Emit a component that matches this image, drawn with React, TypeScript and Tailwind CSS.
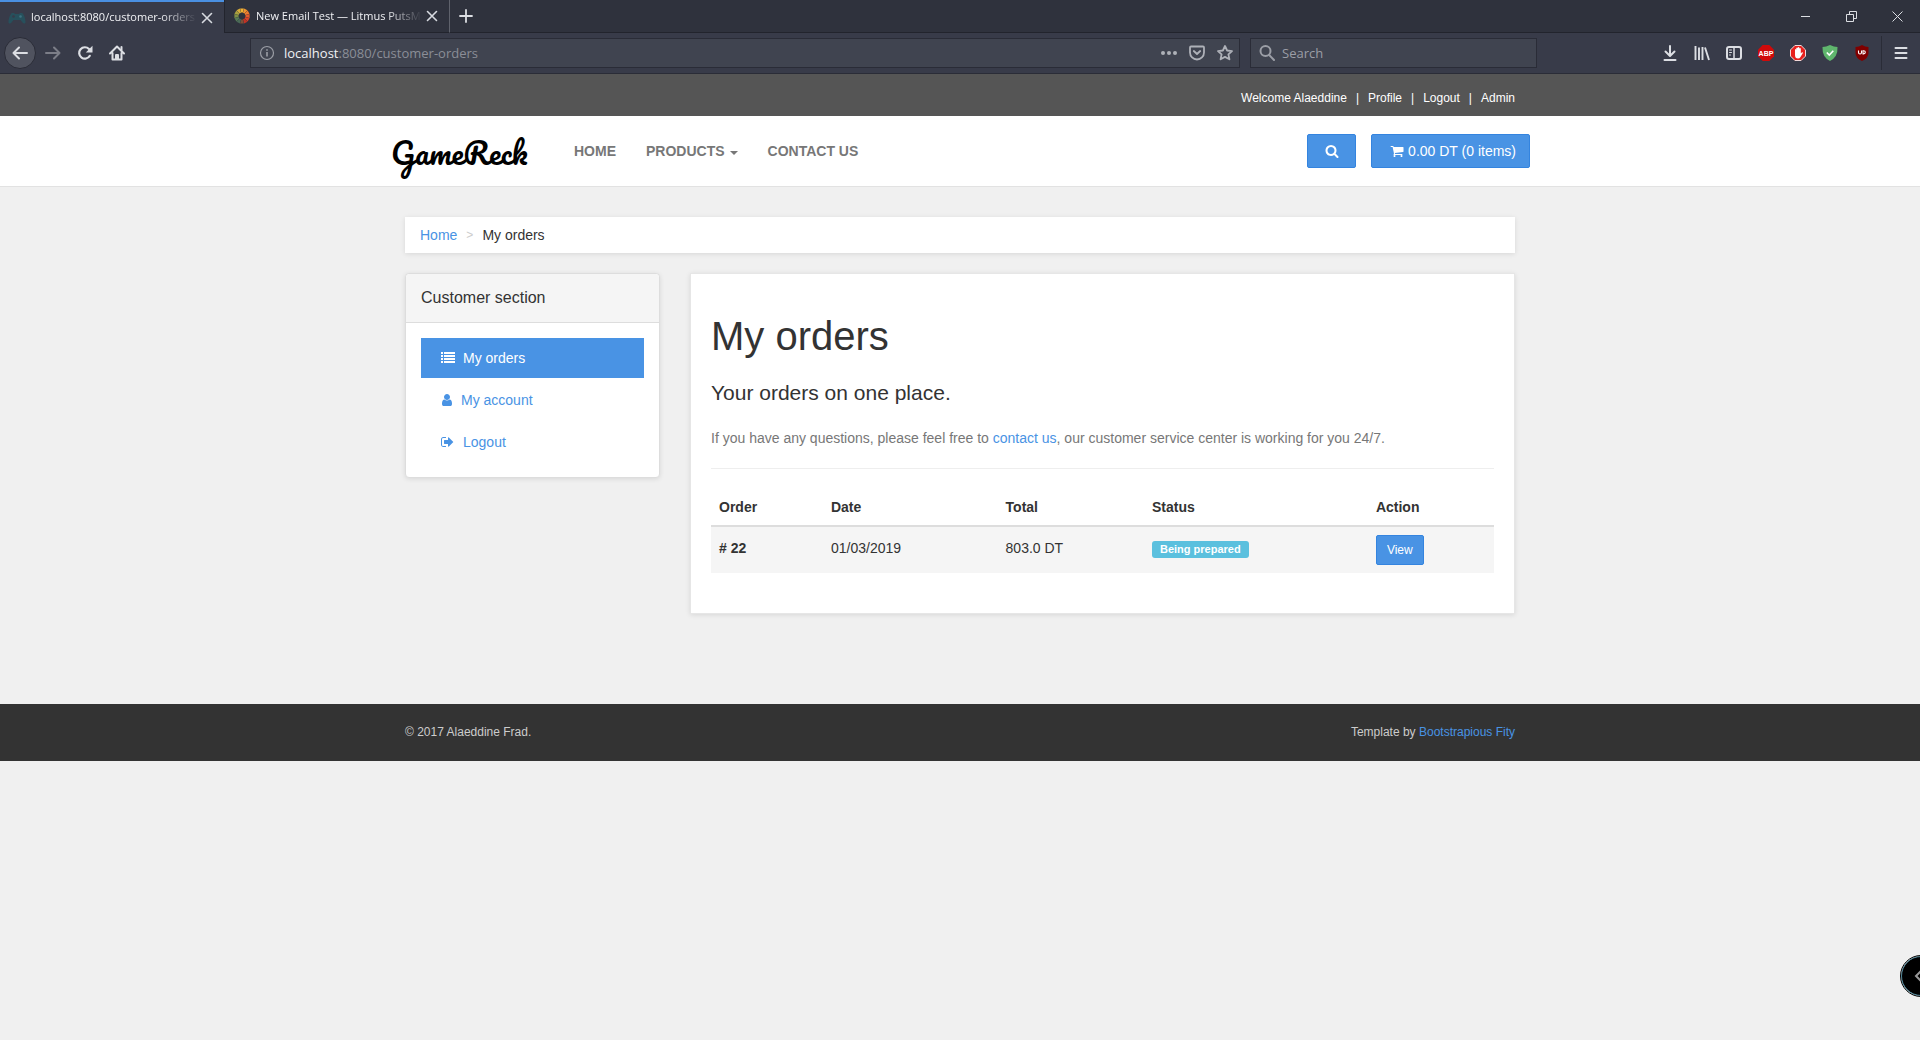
import React from "react";

const FA = {
  search:
    "M1216 832q0-185-131.5-316.5t-316.5-131.5-316.5 131.5-131.5 316.5 131.5 316.5 316.5 131.5 316.5-131.5 131.5-316.5zm512 832q0 52-38 90t-90 38q-54 0-90-38l-343-342q-179 124-399 124-143 0-273.5-55.5t-225-150-150-225-55.5-273.5 55.5-273.5 150-225 225-150 273.5-55.5 273.5 55.5 225 150 150 225 55.5 273.5q0 220-124 399l343 343q37 37 37 90z",
  cart:
    "M704 1536q0 52-38 90t-90 38-90-38-38-90 38-90 90-38 90 38 38 90zm896 0q0 52-38 90t-90 38-90-38-38-90 38-90 90-38 90 38 38 90zm128-1088v512q0 24-16.5 42.5t-40.5 21.5l-1044 122q13 60 13 70 0 16-24 64h920q26 0 45 19t19 45-19 45-45 19h-1024q-26 0-45-19t-19-45q0-11 8-31.5t16-36 21.5-40 15.5-29.5l-177-823h-204q-26 0-45-19t-19-45 19-45 45-19h256q16 0 28.5 6.5t19.5 15.5 13 24.5 8 26 5.5 29.5 4.5 26h1201q26 0 45 19t19 45z",
  list:
    "M0 1280h256v256h-256zM0 896h256v256h-256zM0 512h256v256h-256zM0 128h256v256h-256zM384 1280h1408v256h-1408zM384 896h1408v256h-1408zM384 512h1408v256h-1408zM384 128h1408v256h-1408z",
  user:
    "M1408 1399q0 109-62.5 187t-150.5 78h-854q-88 0-150.5-78t-62.5-187q0-85 8.5-160.5t31.5-152 58.5-131 94-89 134.5-34.5q131 128 313 128t313-128q76 0 134.5 34.5t94 89 58.5 131 31.5 152 8.5 160.5zm-256-887q0 159-112.5 271.5t-271.5 112.5-271.5-112.5-112.5-271.5 112.5-271.5 271.5-112.5 271.5 112.5 112.5 271.5z",
  signOut:
    "M640 1440q0 4 1 20t.5 26.5-3 23.5-10 19.5-20.5 6.5h-320q-119 0-203.5-84.5t-84.5-203.5v-704q0-119 84.5-203.5t203.5-84.5h320q13 0 22.5 9.5t9.5 22.5q0 4 1 20t.5 26.5-3 23.5-10 19.5-20.5 6.5h-320q-66 0-113 47t-47 113v704q0 66 47 113t113 47h312l11.5 1 11.5 3 8 5.5 7 9 2 13.5zm928-544q0 26-19 45l-544 544q-19 19-45 19t-45-19-19-45v-288h-448q-26 0-45-19t-19-45v-384q0-26 19-45t45-19h448v-288q0-26 19-45t45-19 45 19l544 544q19 19 19 45z",
};

function Glyph({ d }: { d: string }) {
  return (
    <svg viewBox="0 0 1792 1792" className="size-3.5 shrink-0" fill="currentColor" aria-hidden="true">
      <path d={d} />
    </svg>
  );
}

function Line({ children, className = "size-4", w = 2 }: { children: React.ReactNode; className?: string; w?: number }) {
  return (
    <svg
      viewBox="0 0 16 16"
      className={className}
      fill="none"
      stroke="currentColor"
      strokeWidth={w}
      strokeLinecap="round"
      strokeLinejoin="round"
      aria-hidden="true"
    >
      {children}
    </svg>
  );
}

function CloseTab({ label }: { label: string }) {
  return (
    <button aria-label={label} className="flex size-5 shrink-0 items-center justify-center text-[#d7dae0]">
      <Line className="size-4" w={1.6}>
        <path d="M3.5 3.5l9 9M12.5 3.5l-9 9" />
      </Line>
    </button>
  );
}

const wheel = ["#f2b233", "#f0952f", "#ee7a2e", "#e55a2c", "#d8412a", "#c23325", "#7c5138", "#4b6a58", "#567a56", "#7e8f45", "#a9a040", "#d7ad3a"];

function TabStrip() {
  return (
    <div className="flex h-[33px] bg-[#2f323d] text-[11px] text-[#f0f1f4]">
      <div className="flex w-56 items-center border-t-2 border-[#4a90e2] bg-[#383b49] pr-[7px] pl-2">
        <svg viewBox="0 0 18 14" className="h-3.5 w-[18px] shrink-0" aria-hidden="true">
          <path d="M4 2h2l1 1h4l1-1h2c2 1 3.500 6 3.500 9 0 2-2 2-3 .5L12.500 9h-7l-2 2.500c-1 1.500-3 1.500-3-.5C.5 8 2 3 4 2z" fill="#27505c" />
          <circle cx="5.500" cy="5.500" r="1.300" fill="#383b49" />
          <circle cx="12.500" cy="5.500" r="1.300" fill="#3c7280" />
        </svg>
        <span className="ml-[5px] min-w-0 flex-1 overflow-hidden whitespace-nowrap [mask-image:linear-gradient(to_left,transparent,black_36px)]">
          localhost:8080/customer-orders
        </span>
        <CloseTab label="Close customer orders tab" />
      </div>
      <div className="flex w-[226px] items-center border-r border-b border-l border-r-[#5f626c] border-b-[#22242d] border-l-[#22242d] pr-[7px] pl-[9px]">
        <svg viewBox="-8 -8 16 16" className="size-4 shrink-0" aria-hidden="true">
          {wheel.map((color, i) => (
            <path key={color} d="M-1.900 -7.600L1.900 -7.600L.8 -3.400L-.8 -3.400Z" fill={color} transform={`rotate(${i * 30})`} />
          ))}
        </svg>
        <span className="ml-[6px] min-w-0 flex-1 overflow-hidden pt-px whitespace-nowrap [mask-image:linear-gradient(to_left,transparent,black_36px)]">
          New Email Test — Litmus PutsMail
        </span>
        <CloseTab label="Close Litmus tab" />
      </div>
      <div className="flex flex-1 items-center justify-between border-b border-[#22242d] pl-2 text-[#dcdee3]">
        <button aria-label="New tab">
          <Line w={1.8}>
            <path d="M8 2v12M2 8h12" />
          </Line>
        </button>
        <div className="flex">
          <button aria-label="Minimize" className="flex w-[46px] justify-center">
            <svg viewBox="0 0 11 11" className="size-[11px]" stroke="currentColor" aria-hidden="true">
              <path d="M1 5.500h9" />
            </svg>
          </button>
          <button aria-label="Restore" className="flex w-[46px] justify-center">
            <svg viewBox="0 0 11 11" className="size-[11px]" fill="none" stroke="currentColor" aria-hidden="true">
              <path d="M.5 3.500h7v7h-7zM3.500 3.500v-3h7v7h-3" />
            </svg>
          </button>
          <button aria-label="Close window" className="flex w-[46px] justify-center">
            <svg viewBox="0 0 11 11" className="size-[11px]" stroke="currentColor" aria-hidden="true">
              <path d="M.5 .5l10 10M10.500 .5l-10 10" />
            </svg>
          </button>
        </div>
      </div>
    </div>
  );
}

function BrowserBar() {
  return (
    <div className="flex h-[41px] items-center border-b border-[#2a2c37] bg-[#383b49] text-[#dcdee3]">
      <button aria-label="Back" className="ml-1 flex size-8 items-center justify-center rounded-full border border-[#2a2c37] bg-[#50535f]">
        <Line w={2}>
          <path d="M15 8H1.500M7 2.500L1.500 8L7 13.500" />
        </Line>
      </button>
      <button aria-label="Forward" className="ml-[9px] text-[#7c7e88]">
        <Line w={2}>
          <path d="M1 8h13.500M9 2.500L14.500 8L9 13.500" />
        </Line>
      </button>
      <button aria-label="Reload" className="ml-4">
        <Line w={2.2}>
          <path d="M12.800 10.800A5.700 5.700 0 1 1 12 4" />
          <path d="M15.500 .8v6.700h-6.700z" fill="currentColor" stroke="none" />
        </Line>
      </button>
      <button aria-label="Home" className="ml-4">
        <Line w={2}>
          <path d="M1 8.500L8 1.500l7 7M3.500 8v6.500h9V8" />
          <path d="M7 14v-4h2v4" />
          <path d="M12.500 2v3" />
        </Line>
      </button>
      <div className="ml-[125px] flex h-[30px] min-w-0 flex-1 items-center border border-[#2a2c37] bg-[#404450] pr-[6px] pl-2">
        <svg viewBox="0 0 16 16" className="size-4 text-[#9b9ea6]" fill="none" stroke="currentColor" aria-hidden="true">
          <circle cx="8" cy="8" r="6.500" strokeWidth="1.200" />
          <path d="M8 7v4.500M8 4.200v1.600" strokeWidth="1.600" />
        </svg>
        <span className="ml-[9px] min-w-0 flex-1 truncate pt-px text-[13px] text-[#8b8e97]">
          <span className="text-[#f0f1f4]">localhost</span>:8080/customer-orders
        </span>
        <div className="flex items-center gap-3 text-[#aeb1b8]">
          <button aria-label="Page actions">
            <svg viewBox="0 0 16 16" className="size-4" fill="currentColor" aria-hidden="true">
              <circle cx="2" cy="8" r="2" />
              <circle cx="8" cy="8" r="2" />
              <circle cx="14" cy="8" r="2" />
            </svg>
          </button>
          <button aria-label="Save to Pocket">
            <Line w={1.800}>
              <path d="M2 1.500h12q1 0 1 1v5a7 7 0 0 1-14 0v-5q0-1 1-1z" />
              <path d="M4.800 6L8 9l3.200-3" />
            </Line>
          </button>
          <button aria-label="Bookmark this page">
            <Line w={1.800}>
              <path d="M8 1l2.100 4.500 4.900.6-3.600 3.300 1 4.900L8 11.900l-4.400 2.400 1-4.900L1 6.100l4.900-.6z" />
            </Line>
          </button>
        </div>
      </div>
      <label className="ml-[10px] flex h-[30px] w-[287px] items-center border border-[#2a2c37] bg-[#404450] pl-2 text-[#9b9ea6]">
        <Line w={2} className="size-4">
          <circle cx="6.500" cy="6" r="5" />
          <path d="M10.200 10L15 15" />
        </Line>
        <input aria-label="Search the web" placeholder="Search" className="ml-[7px] min-w-0 flex-1 bg-transparent pt-px text-[13px] outline-none placeholder:text-[#9b9ea6]" />
      </label>
      <div className="ml-[125px] flex items-center gap-4">
        <button aria-label="Downloads">
          <Line w={2}>
            <path d="M8 1v9.500M3.500 6.500L8 11l4.500-4.500M2.500 15h11" />
          </Line>
        </button>
        <button aria-label="Library">
          <svg viewBox="0 0 16 16" className="size-4" stroke="currentColor" strokeWidth="1.900" aria-hidden="true">
            <path d="M1.500 1v14M5 2.500v12.500M8.500 2v13M11 2.500l4 12.500" />
          </svg>
        </button>
        <button aria-label="Sidebars">
          <Line w={2}>
            <rect x="1" y="2" width="14" height="12" rx="2" />
            <path d="M8 2v12" strokeWidth="1.500" />
            <path d="M3.500 5h2M3.500 7.500h2M3.500 10h1" strokeWidth="1" />
          </Line>
        </button>
        <button aria-label="Adblock Plus">
          <svg viewBox="0 0 16 16" className="size-4" aria-hidden="true">
            <path d="M4.700 0h6.600L16 4.700v6.600L11.300 16H4.700L0 11.300V4.700z" fill="#d00a0a" />
            <text x="8" y="10.500" fontSize="7" fontWeight="700" textAnchor="middle" fill="#fff" className="font-['Liberation_Sans',sans-serif]">
              ABP
            </text>
          </svg>
        </button>
        <button aria-label="Content blocker">
          <svg viewBox="0 0 16 16" className="size-4" aria-hidden="true">
            <path d="M4.900.5h6.200l4.400 4.400v6.200l-4.400 4.400H4.900L.5 11.100V4.900z" fill="#e8201c" stroke="#f2d8d8" />
            <path d="M5 8V4.500q.7-.8 1.300 0V3q.8-.9 1.500 0v-.5q.8-.8 1.500 0V3.500q.8-.8 1.500 0v5l1.200-1.200q1-.3.900.6L10.500 12q-.8 1.500-2.500 1.500Q5 13.500 5 10z" fill="#fff" />
          </svg>
        </button>
        <button aria-label="Web protection">
          <svg viewBox="0 0 16 16" className="size-4" aria-hidden="true">
            <path d="M8 0q4 2 7.500 2 .5 10-7.500 14Q0 12 .5 2 4 2 8 0z" fill="#5fb56d" />
            <path d="M4.800 7.500L7.300 10l4-4.200" fill="none" stroke="#fff" strokeWidth="1.600" />
          </svg>
        </button>
        <button aria-label="Tracker shield">
          <svg viewBox="0 0 16 16" className="size-4" aria-hidden="true">
            <path d="M8 0q3 2 6.500 2v6q0 5-6.500 8-6.500-3-6.500-8V2Q5 2 8 0z" fill="#800000" />
            <path d="M4.500 5.500v2q0 1.500 1.500 1.500t1.500-1.500v-2M9 5.700v3.200h.6q1.700-.1 1.700-1.600T9.600 5.700z" fill="none" stroke="#fff" strokeWidth="1.100" />
          </svg>
        </button>
      </div>
      <div className="ml-[11px] h-[34px] border-l border-[#2a2c37]" />
      <button aria-label="Open menu" className="mr-[11px] ml-[11px]">
        <Line w={2}>
          <path d="M2.500 3h11M2.500 8h11M2.500 13h11" />
        </Line>
      </button>
    </div>
  );
}

function TopBar() {
  return (
    <div className="bg-[#555] text-xs text-white">
      <div className="mx-auto flex h-[42px] max-w-[1140px] items-center justify-end gap-[9px] px-[15px] pt-1.5">
        <span className="font-medium">Welcome Alaeddine</span>
        <span>|</span>
        <a href="#profile">Profile</a>
        <span>|</span>
        <a href="#logout">Logout</a>
        <span>|</span>
        <a href="#admin">Admin</a>
      </div>
    </div>
  );
}

function SiteNav() {
  return (
    <header className="border-b border-[#e2e2e2] bg-white">
      <div className="mx-auto flex h-[70px] max-w-[1140px] items-center">
        <a href="#home" className="w-[154px] pt-1 pl-px font-[Pacifico,Lato,cursive] text-[30px] leading-9 font-normal whitespace-nowrap text-black">
          GameReck
        </a>
        <nav className="flex flex-1 gap-[30px] pl-[30px] text-sm font-bold text-[#777]">
          <a href="#home">HOME</a>
          <a href="#products" className="flex items-center">
            PRODUCTS
            <svg viewBox="0 0 8 4" className="mt-1 ml-[5px] h-1 w-2" fill="currentColor" aria-hidden="true">
              <path d="M0 0h8L4 4z" />
            </svg>
          </a>
          <a href="#contact">CONTACT US</a>
        </nav>
        <button aria-label="Search" className="flex h-[34px] w-[49px] items-center justify-center rounded-xs border border-[#3484df] bg-[#4993e4] text-white">
          <Glyph d={FA.search} />
        </button>
        <a href="#cart" className="ml-[15px] flex h-[34px] items-center gap-1 rounded-xs border border-[#3484df] bg-[#4993e4] pr-[13px] pl-[18px] text-sm text-white">
          <Glyph d={FA.cart} />
          0.00 DT (0 items)
        </a>
      </div>
    </header>
  );
}

const menu = [
  { label: "My orders", icon: FA.list, gap: "gap-2", active: true },
  { label: "My account", icon: FA.user, gap: "gap-[6px]", active: false },
  { label: "Logout", icon: FA.signOut, gap: "gap-2", active: false },
];

function Sidebar() {
  return (
    <aside className="w-[255px] shrink-0 rounded-sm border border-[#ddd] bg-white shadow-[0_1px_5px_rgba(0,0,0,0.1)]">
      <h3 className="h-[49px] rounded-t-sm border-b border-[#ddd] bg-[#f5f5f5] px-[15px] pt-[14px] text-base leading-5 text-[#333]">Customer section</h3>
      <nav className="flex flex-col gap-[2px] p-[15px]">
        {menu.map((m) => (
          <a
            key={m.label}
            href={"#" + m.label.toLowerCase().replace(" ", "-")}
            className={"flex h-10 items-center px-5 text-sm " + m.gap + (m.active ? " bg-[#4993e4] text-white" : " text-[#4993e4]")}
          >
            <Glyph d={m.icon} />
            {m.label}
          </a>
        ))}
      </nav>
    </aside>
  );
}

function Orders() {
  return (
    <main className="min-w-0 flex-1 border border-[#e6e6e6] bg-white px-5 pb-10 shadow-[0_1px_5px_rgba(0,0,0,0.1)]">
      <h1 className="pt-10 text-[40px] leading-11 text-[#333]">My orders</h1>
      <p className="mt-5 text-[21px] leading-[30px] text-[#333]">Your orders on one place.</p>
      <p className="mt-5 text-sm leading-5 text-[#777]">
        If you have any questions, please feel free to{" "}
        <a href="#contact" className="text-[#4993e4]">
          contact us
        </a>
        , our customer service center is working for you 24/7.
      </p>
      <hr className="mt-5 border-[#eee]" />
      <table className="mt-5 w-full table-fixed text-left text-sm leading-5 text-[#333]">
        <colgroup>
          <col className="w-[14.3%]" />
          <col className="w-[22.3%]" />
          <col className="w-[18.7%]" />
          <col className="w-[28.6%]" />
          <col />
        </colgroup>
        <thead>
          <tr className="border-b-2 border-[#ddd]">
            <th className="p-2">Order</th>
            <th className="p-2">Date</th>
            <th className="p-2">Total</th>
            <th className="p-2">Status</th>
            <th className="p-2">Action</th>
          </tr>
        </thead>
        <tbody>
          <tr className="bg-[#f5f5f5] align-top">
            <th className="p-2 pt-[11px]"># 22</th>
            <td className="p-2 pt-[11px]">01/03/2019</td>
            <td className="p-2 pt-[11px]">803.0 DT</td>
            <td className="p-2 pt-[14px]">
              <span className="block h-[17px] w-fit rounded-[3px] bg-[#5bc0de] px-2 text-[11px] leading-[17px] font-bold text-white">Being prepared</span>
            </td>
            <td className="p-2">
              <button className="block h-[30px] rounded-xs border border-[#3484df] bg-[#4993e4] px-[10px] text-xs text-white">View</button>
            </td>
          </tr>
        </tbody>
      </table>
    </main>
  );
}

export default function App() {
  return (
    <div className="relative min-h-screen overflow-hidden bg-[#f0f0f0] font-['Liberation_Sans',Arial,sans-serif]">
      <div className="font-['Open_Sans',sans-serif]">
        <TabStrip />
        <BrowserBar />
      </div>
      <TopBar />
      <SiteNav />
      <div className="mx-auto max-w-[1140px] px-[15px] pt-[30px] pb-[90px]">
        <nav aria-label="Breadcrumb" className="mb-5 flex h-9 items-center bg-white px-[15px] text-sm text-[#333] shadow-[0_1px_5px_rgba(0,0,0,0.1)]">
          <a href="#home" className="text-[#4993e4]">
            Home
          </a>
          <span className="px-[9px] text-xs text-[#ccc]">&gt;</span>
          <span>My orders</span>
        </nav>
        <div className="flex items-start gap-[30px]">
          <Sidebar />
          <Orders />
        </div>
      </div>
      <footer className="bg-[#333] text-xs text-[#ccc]">
        <div className="mx-auto flex h-[57px] max-w-[1140px] items-center justify-between px-[15px] pb-0.5">
          <p>© 2017 Alaeddine Frad.</p>
          <p>
            Template by{" "}
            <a href="#template" className="text-[#4993e4]">
              Bootstrapious Fity
            </a>
          </p>
        </div>
      </footer>
      <button aria-label="Open side panel" className="absolute -right-[21px] bottom-11 flex size-10 items-center rounded-full border border-[#4f8ba0] bg-black pl-3 text-[#999] outline outline-black">
        <svg viewBox="0 0 8 14" className="h-3.5 w-2" fill="none" stroke="currentColor" strokeWidth="2" aria-hidden="true">
          <path d="M8 1L2 7l6 6" />
        </svg>
      </button>
    </div>
  );
}
